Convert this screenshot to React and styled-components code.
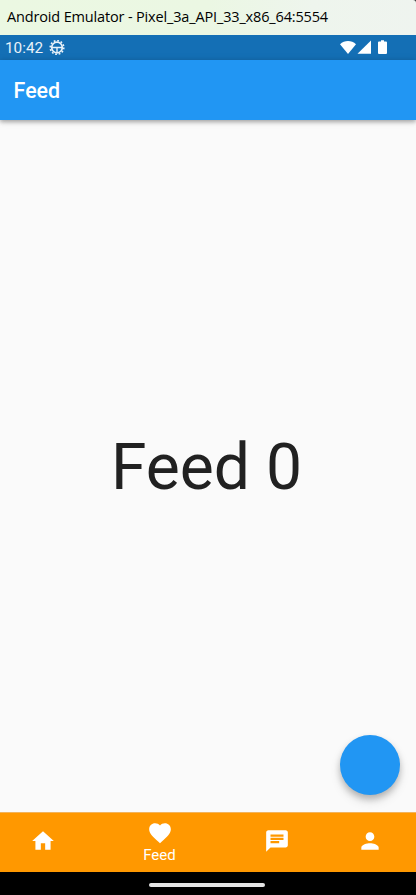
import React from 'react';
import styled, { createGlobalStyle } from 'styled-components';

const GlobalStyle = createGlobalStyle`
  * { box-sizing: border-box; }
  body { margin: 0; background: #000; font-family: Roboto, sans-serif; }
`;

const Screen = styled.div`
  width: 416px;
  height: 895px;
  display: flex;
  flex-direction: column;
  overflow: hidden;
  background: #fafafa;
`;

const WindowTitle = styled.div`
  flex: 0 0 35px;
  padding-left: 7px;
  line-height: 33px;
  font-family: 'Open Sans', 'Noto Sans', sans-serif;
  font-size: 14.5px;
  letter-spacing: -0.155px;
  white-space: nowrap;
  color: #000;
  background: linear-gradient(90deg, #ebf8e2 0%, #ebf7e3 50%, #eef5ed 75%, #eff4ef 100%);
  border-top-right-radius: 3px;
`;

const TitleFrame = styled.div`
  flex: 0 0 35px;
  background: #333;
  display: flex;
  flex-direction: column;
`;

const StatusBar = styled.div`
  flex: 0 0 25px;
  display: flex;
  align-items: center;
  padding: 1px 28px 0 5px;
  color: #e9f2f9;
  font-size: 15.3px;
  background: #146fb5;
`;

const Clock = styled.span`
  width: 44px;
  line-height: 24px;
`;

const StatusIcons = styled.div`
  display: flex;
  margin-left: auto;
`;

const AppBar = styled.header`
  flex: 0 0 60px;
  display: flex;
  align-items: center;
  padding: 1px 0 0 13.6px;
  font-size: 21.4px;
  font-weight: 500;
  color: #fff;
  background: #2196f3;
  box-shadow: 0 2px 4px rgba(0, 0, 0, 0.28), 0 1px 8px rgba(0, 0, 0, 0.12);
  z-index: 1;
`;

const Content = styled.main`
  position: relative;
  flex: 1;
  display: flex;
  align-items: center;
  justify-content: center;
  padding: 2px 3px 0 0;
`;

const Headline = styled.h1`
  margin: 0;
  font-size: 64.2px;
  font-weight: 400;
  line-height: 75px;
  color: #212121;
`;

const FloatingButton = styled.button`
  position: absolute;
  right: 16.5px;
  bottom: 17px;
  width: 60px;
  height: 60px;
  padding: 0;
  border: 0;
  border-radius: 50%;
  background: #2196f3;
  box-shadow: 0 4px 6px rgba(0, 0, 0, 0.2), 0 6px 11px rgba(0, 0, 0, 0.12);
`;

const NavBar = styled.nav`
  flex: 0 0 60px;
  display: grid;
  grid-template-columns: 89.5px 140px 94.5px 92px;
  padding-bottom: 3px;
  border-top: 1px solid #f2b35c;
  background: #ff9800;
  color: #fff;
`;

const NavItem = styled.div`
  display: flex;
  flex-direction: column;
  align-items: center;
  justify-content: center;
  padding-right: ${(p) => (p.$inset ? `${p.$inset}px` : 0)};
`;

const NavLabel = styled.span`
  margin-top: 1px;
  margin-bottom: -2px;
  font-size: 15px;
  line-height: 17px;
`;

const GestureBar = styled.div`
  flex: 0 0 23px;
  display: flex;
  align-items: center;
  justify-content: center;
  padding: 3px 3px 0 0;
  background: #000;
`;

const Handle = styled.div`
  width: 116px;
  height: 4px;
  border-radius: 2px;
  background: #e5e5e5;
`;

const NavIcon = ({ d }) => (
  <svg width="26" height="26" viewBox="0 0 24 24" fill="currentColor">
    <path d={d} />
  </svg>
);

const items = [
  { d: 'M10 20v-6h4v6h5v-8h3L12 3 2 12h3v8z', inset: 3.5 },
  {
    d: 'M12 21.35l-1.45-1.32C5.4 15.36 2 12.28 2 8.5 2 5.42 4.42 3 7.5 3c1.74 0 3.41.81 4.5 2.09C13.09 3.81 14.76 3 16.5 3 19.58 3 22 5.42 22 8.5c0 3.78-3.4 6.86-8.55 11.54z',
    label: 'Feed',
  },
  { d: 'M20 2H4c-1.1 0-1.99.9-1.99 2L2 22l4-4h14c1.1 0 2-.9 2-2V4c0-1.1-.9-2-2-2zM6 9h12v2H6V9zm8 5H6v-2h8v2zm4-6H6V6h12v2z' },
  { d: 'M12 12c2.21 0 4-1.79 4-4s-1.79-4-4-4-4 1.79-4 4 1.79 4 4 4zm0 2c-2.67 0-8 1.34-8 4v2h16v-2c0-2.66-5.33-4-8-4z' },
];

const GearIcon = () => (
  <svg width="16" height="16" viewBox="0 0 16 16" fill="none" stroke="#e9f2f9">
    <circle cx="8" cy="7.500" r="5.300" strokeWidth="1.700" />
    <circle cx="8" cy="7.500" r="6.800" strokeWidth="1.600" strokeDasharray="1.800 1.760" />
    <path d="M3 7.500h10M8 7.500v5.200" strokeWidth="1.400" />
  </svg>
);

export default function App() {
  return (
    <Screen>
      <GlobalStyle />
      <TitleFrame>
        <WindowTitle>Android Emulator - Pixel_3a_API_33_x86_64:5554</WindowTitle>
      </TitleFrame>
      <StatusBar>
        <Clock>10:42</Clock>
        <GearIcon />
        <StatusIcons>
          <svg width="48" height="16" viewBox="0 0 48 16" fill="#fff">
            <path d="M0 4.200C4.500-.2 11.500-.2 16 4.200L8 14z" />
            <path d="M31 .5v13.300H17.500z" />
            <path d="M41 .3h3v1.200h2a1 1 0 0 1 1 1V13a1 1 0 0 1-1 1h-7a1 1 0 0 1-1-1V2.500a1 1 0 0 1 1-1h2z" />
          </svg>
        </StatusIcons>
      </StatusBar>
      <AppBar>Feed</AppBar>
      <Content>
        <Headline>Feed 0</Headline>
        <FloatingButton aria-label="Add" />
      </Content>
      <NavBar>
        {items.map((item) => (
          <NavItem key={item.d} $inset={item.inset}>
            <NavIcon d={item.d} />
            {item.label && <NavLabel>{item.label}</NavLabel>}
          </NavItem>
        ))}
      </NavBar>
      <GestureBar>
        <Handle />
      </GestureBar>
    </Screen>
  );
}
